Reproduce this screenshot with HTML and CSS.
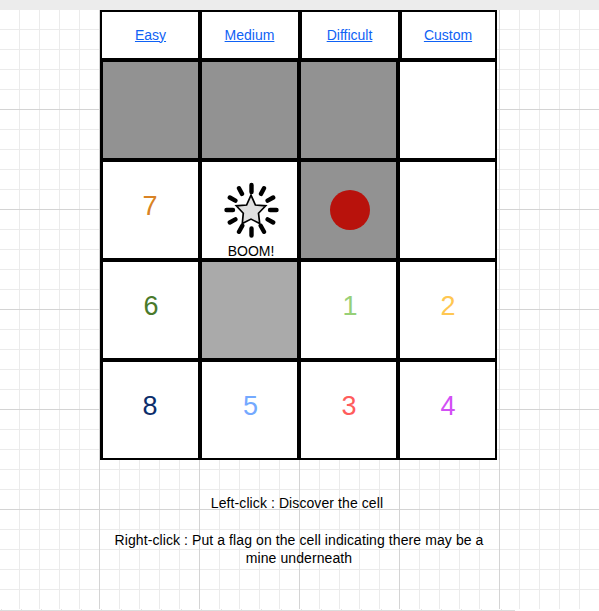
FILE: index.html
```html
<!DOCTYPE html>
<html lang="en">
<head>
<meta charset="utf-8">
<title>Minesweeper</title>
<link rel="stylesheet" href="styles.css">
</head>
<body>
<div class="topbar"></div>
<main class="canvas">
  <section class="game">
    <nav class="levels">
      <a class="level" href="#">Easy</a>
      <a class="level" href="#">Medium</a>
      <a class="level" href="#">Difficult</a>
      <a class="level" href="#">Custom</a>
    </nav>
    <div class="board">
      <div class="cell hidden"></div>
      <div class="cell hidden"></div>
      <div class="cell hidden"></div>
      <div class="cell"></div>
      <div class="cell n7">7</div>
      <div class="cell mine">
        <svg class="blast" viewBox="0 0 56 56" width="56" height="56">
          <g stroke="#000" stroke-width="4.400" stroke-linecap="round">
            <path d="M28.500 3v7M28.500 46.500v7M3.500 28h6.500M47 28h6.500M16 6.300l3 5.600M41 6.300l-3 5.600M6.800 15.500l5.600 3.200M50.200 15.500l-5.600 3.200M6.800 40.500l5.600-3.200M50.200 40.500l-5.600-3.200M16 49.700l3.300-6M41 49.700l-3.300-6"/>
          </g>
          <path d="M28 13.200l4.400 9.800 10.300.8-7.200 7.400 1.200 10.300-8.700-4.400-8.700 4.400 1-10.300-7-7.400 10.300-.8z" fill="#e0e0e0" stroke="#000" stroke-width="1.700"/>
        </svg>
        <span class="boom">BOOM!</span>
      </div>
      <div class="cell hidden flagged"><span class="flag"></span></div>
      <div class="cell"></div>
      <div class="cell n6">6</div>
      <div class="cell hover"></div>
      <div class="cell n1">1</div>
      <div class="cell n2">2</div>
      <div class="cell n8">8</div>
      <div class="cell n5">5</div>
      <div class="cell n3">3</div>
      <div class="cell n4">4</div>
    </div>
  </section>
  <section class="help">
    <p class="discover">Left-click : Discover the cell</p>
    <p>Right-click : Put a flag on the cell indicating there may be a mine underneath</p>
  </section>
</main>
<footer class="edge"><div class="ticks"></div><div class="rule"></div></footer>
</body>
</html>
```
FILE: styles.css
```css
* { box-sizing: border-box; }

body {
  margin: 0;
  background: #fff;
  color: #000;
  font: 14px/18px "Liberation Sans", Arial, sans-serif;
}

.topbar { height: 10px; background: #ececec; }

.canvas {
  height: 599px;
  padding-left: 100px;
  background:
    repeating-linear-gradient(to right, transparent 0 99px, #d4d4d4 99px 100px),
    repeating-linear-gradient(to bottom, transparent 0 99px, #d4d4d4 99px 100px),
    repeating-linear-gradient(to right, transparent 0 19px, #ebebeb 19px 20px),
    repeating-linear-gradient(to bottom, transparent 0 19px, #ebebeb 19px 20px);
}

.game { width: 397px; background: #000; }

.levels {
  display: grid;
  grid-template-columns: 96px 96px 96px 93px;
  grid-template-rows: 46px;
  gap: 4px;
  padding: 2px 2px 4px;
}

.level {
  display: flex;
  align-items: center;
  justify-content: center;
  padding: 0 1px 1px 0;
  background: #fff;
  color: #0f62f5;
}

.level:first-child { padding: 0 0 1px 1px; }

.board {
  display: grid;
  grid-template-columns: repeat(4, 95px);
  grid-template-rows: repeat(4, 96px);
  gap: 4px;
  padding: 0 2px 2px 3px;
}

.cell {
  display: flex;
  align-items: center;
  justify-content: center;
  padding: 0 0 8px 1px;
  background: #fff;
  font-size: 27px;
  line-height: 30px;
}

.hidden { padding: 0; background: #929292; }
.flagged { padding-left: 2px; }
.hover { background: #aaa; }

.n1 { color: #97d077; padding-left: 3px; }
.n2 { color: #ffc752; }
.n3 { color: #ff5c5c; }
.n4 { color: #d24ff5; }
.n5 { color: #74a9ff; padding-left: 2px; }
.n6 { color: #4a7a2c; }
.n7 { color: #d98324; padding: 0 1px 8px 0; }
.n8 { color: #0b2d6b; padding: 0 1px 8px 0; }

.mine {
  flex-direction: column;
  justify-content: flex-start;
  padding: 20px 0 0 3px;
}

.blast { flex: none; }
.boom { font-size: 14px; line-height: 18px; margin-top: 4px; }

.flag {
  width: 40px;
  height: 40px;
  border-radius: 50%;
  background: #b8120c;
}

.help {
  width: 398px;
  padding: 34px 8px 0;
  text-align: center;
  letter-spacing: 0.09px;
}

.help p { margin: 0 0 19px; }
.help .discover { padding-right: 4px; }

.edge { height: 2px; }
.ticks {
  width: 515px;
  height: 1px;
  background: repeating-linear-gradient(to right, transparent 0 1px, #e2e2e2 1px 2px, transparent 2px 20px);
}
.rule { width: 515px; height: 1px; background: #dcdcdc; }
```
